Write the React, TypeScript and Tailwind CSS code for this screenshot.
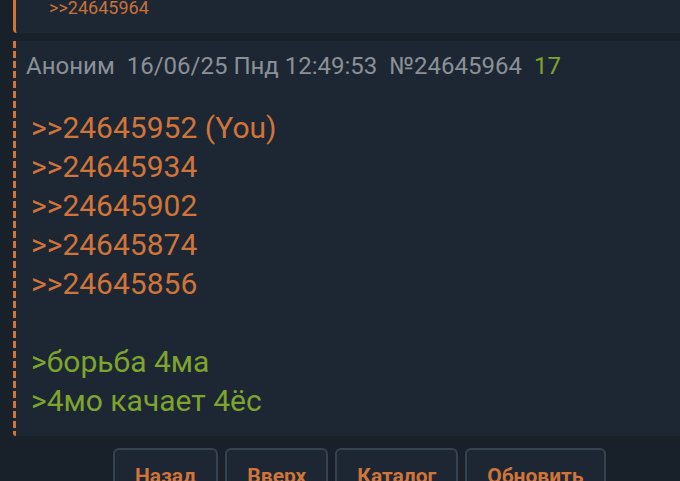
import React from "react";

const replies = ["24645952", "24645934", "24645902", "24645874", "24645856"];
const greentext = [">борьба 4ма", ">4мо качает 4ёс"];
const buttons = ["Назад", "Вверх", "Каталог", "Обновить"];

export default function App() {
  return (
    <div className="h-[481px] w-[680px] overflow-hidden bg-[#18212a] font-['Roboto',sans-serif]">
      {/* previous post, only its tail is visible */}
      <div className="ml-[13px] mt-[-20px] h-[53px] rounded-bl-[4px] border-l-[3px] border-[#d0743a] bg-[#1c2733] pl-[33px] pt-[16px]">
        <span className="text-[18px] leading-[24px] text-[#c9713a]">&gt;&gt;24645964</span>
      </div>

      {/* post */}
      <div className="relative ml-[13px] mt-[8px] h-[395px] bg-[#1c2733]">
        <div className="absolute bottom-0 left-0 top-0 w-[3px] rounded-bl-[3px] bg-[repeating-linear-gradient(to_bottom,#d0743a_0px,#d0743a_7px,transparent_7px,transparent_10px)]" />
        <div className="flex items-baseline gap-[12px] pl-[13px] pt-[10px] text-[24px] leading-[30px] text-[#8b9096]">
          <span>Аноним</span>
          <span>16/06/25 Пнд 12:49:53</span>
          <span>№24645964</span>
          <span className="text-[#7ea42e]">17</span>
        </div>
        <div className="pl-[18px] pt-[27px] text-[30px] leading-[39px]">
          {replies.map((r, i) => (
            <div key={r} className="text-[#d0743a]">
              &gt;&gt;{r}
              {i === 0 && " (You)"}
            </div>
          ))}
          <div className="h-[39px]" />
          {greentext.map((t) => (
            <div key={t} className="text-[#7ea42e]">
              {t}
            </div>
          ))}
        </div>
      </div>

      {/* navigation */}
      <div className="ml-[113px] mt-[12px] flex gap-[7px]">
        {buttons.map((b) => (
          <div
            key={b}
            className="h-[50px] rounded-[6px] border-2 border-[#354350] bg-[#1c2733] px-[20px] pt-[12px] text-[21px] font-bold leading-[28px] text-[#d0743a]"
          >
            {b}
          </div>
        ))}
      </div>
    </div>
  );
}
